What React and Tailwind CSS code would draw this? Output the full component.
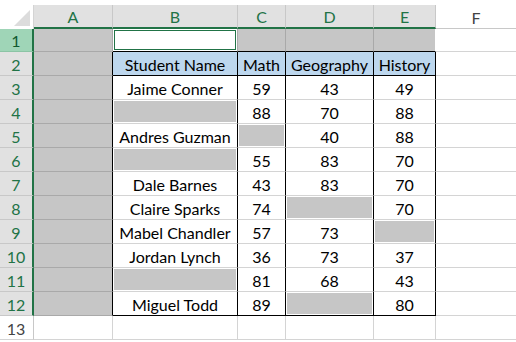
import React from "react";

const cols = ["A", "B", "C", "D", "E", "F"];

// null marks a blank cell (selected by Go To Special > Blanks)
const data = [
  ["Jaime Conner", "59", "43", "49"],
  [null, "88", "70", "88"],
  ["Andres Guzman", null, "40", "88"],
  [null, "55", "83", "70"],
  ["Dale Barnes", "43", "83", "70"],
  ["Claire Sparks", "74", null, "70"],
  ["Mabel Chandler", "57", "73", null],
  ["Jordan Lynch", "36", "73", "37"],
  [null, "81", "68", "43"],
  ["Miguel Todd", "89", null, "80"],
];

const widths = ["w-[79px]", "w-[125px]", "w-[48px]", "w-[88px]", "w-[62px]", "w-[80px]"];

const RowHeader = ({ n, active, selected }) => (
  <div
    className={
      "w-[34px] shrink-0 flex items-center justify-center border-b pt-[2px] " +
      (active
        ? "bg-[#9fd5b7] text-[#0f5a2f] border-b-[#8cc4a5] border-r-2 border-r-[#217346]"
        : selected
        ? "bg-[#e1e1e1] text-[#217346] border-b-[#c8c8c8] border-r-2 border-r-[#217346]"
        : "bg-white text-[#444] border-b-[#d4d4d4] border-r border-r-[#c8c8c8] pr-px")
    }
  >
    {n}
  </div>
);

const GrayCell = ({ w, right, bottom }) => (
  <div className={`${w} shrink-0 h-full border-r border-b ${right} ${bottom} bg-white`}>
    <div className="h-full w-full bg-[#c6c6c6]" />
  </div>
);

const TableCell = ({ w, value, head, last }) => {
  const bottom = head || last ? "border-b-black" : "border-b-[#d4d4d4]";
  return (
    <div
      className={`${w} shrink-0 h-full border-r border-b border-r-black ${bottom} flex items-center justify-center ${
        head ? "bg-[#bdd7ee]" : "bg-white"
      }`}
    >
      {value === null ? (
        <div className="w-full h-full p-px">
          <div className="w-full h-full bg-[#c6c6c6]" />
        </div>
      ) : (
        <span className="whitespace-nowrap pt-[3px]">{value}</span>
      )}
    </div>
  );
};

export default function App() {
  return (
    <div
      className="w-[516px] h-[342px] bg-white overflow-hidden pt-[5px] text-[16px] text-black"
      style={{ fontFamily: "Lato, 'Liberation Sans', sans-serif" }}
    >
      {/* column headers */}
      <div className="flex h-[24px]">
        <div className="w-[34px] shrink-0 bg-white border-r border-[#d4d4d4] flex items-end justify-end pr-[3px] pb-[3px]">
          <svg width="16" height="16" viewBox="0 0 16 16">
            <polygon points="16,0 16,16 0,16" fill="#dcdcdc" />
          </svg>
        </div>
        {cols.map((c, i) =>
          c === "F" ? (
            <div
              key={c}
              className={`${widths[i]} shrink-0 flex items-center justify-center bg-white text-[#444] border-b border-[#c8c8c8] pt-[2px]`}
            >
              {c}
            </div>
          ) : (
            <div
              key={c}
              className={`${widths[i]} shrink-0 flex items-center justify-center bg-[#e1e1e1] text-[#217346] border-r border-r-[#c8c8c8] border-b-2 border-b-[#217346] pt-[2px]`}
            >
              {c}
            </div>
          )
        )}
      </div>

      {/* row 1 */}
      <div className="flex h-[23px]">
        <RowHeader n={1} active />
        <GrayCell w={widths[0]} right="border-r-[#a9a9a9]" bottom="border-b-[#a9a9a9]" />
        <div className={`${widths[1]} shrink-0 h-full border-r border-b border-r-[#a9a9a9] border-b-black p-px`}>
          <div className="w-full h-full border border-[#217346]" />
        </div>
        <GrayCell w={widths[2]} right="border-r-[#a9a9a9]" bottom="border-b-black" />
        <GrayCell w={widths[3]} right="border-r-[#a9a9a9]" bottom="border-b-black" />
        <GrayCell w={widths[4]} right="border-r-white" bottom="border-b-black" />
        <div className={`${widths[5]} shrink-0 border-b border-[#d4d4d4]`} />
      </div>

      {/* row 2: table header */}
      <div className="flex h-[24px]">
        <RowHeader n={2} selected />
        <GrayCell w={widths[0]} right="border-r-black" bottom="border-b-[#a9a9a9]" />
        {["Student Name", "Math", "Geography", "History"].map((t, i) => (
          <TableCell key={t} w={widths[i + 1]} value={t} head />
        ))}
        <div className={`${widths[5]} shrink-0 border-b border-[#d4d4d4]`} />
      </div>

      {/* rows 3-12 */}
      {data.map((row, r) => (
        <div key={r} className="flex h-[24px]">
          <RowHeader n={r + 3} selected />
          <GrayCell w={widths[0]} right="border-r-black" bottom="border-b-[#a9a9a9]" />
          {row.map((v, i) => (
            <TableCell key={i} w={widths[i + 1]} value={v} last={r === data.length - 1} />
          ))}
          <div className={`${widths[5]} shrink-0 border-b border-[#d4d4d4]`} />
        </div>
      ))}

      {/* row 13 */}
      <div className="flex h-[24px]">
        <RowHeader n={13} />
        {widths.map((w, i) => (
          <div
            key={i}
            className={`${w} shrink-0 border-b border-[#d4d4d4] ${i < 5 ? "border-r" : ""}`}
          />
        ))}
      </div>
    </div>
  );
}
